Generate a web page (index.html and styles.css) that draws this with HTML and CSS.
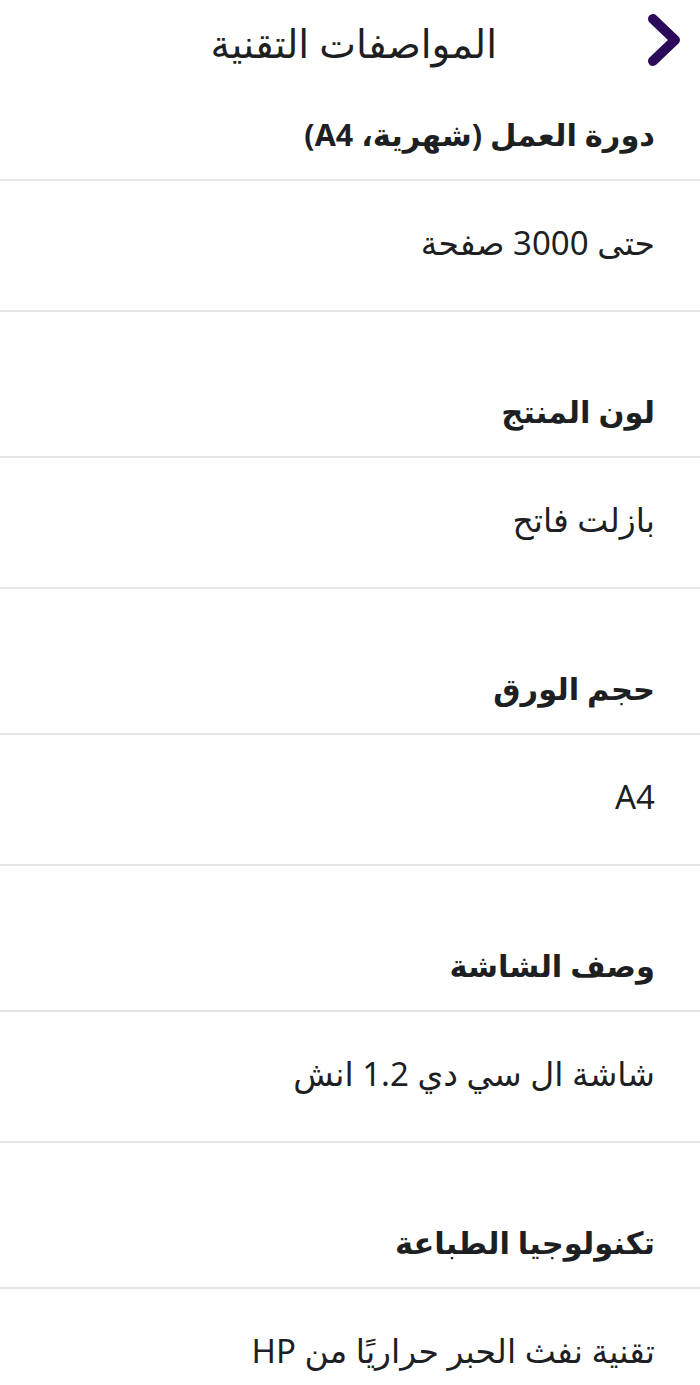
FILE: index.html
```html
<!DOCTYPE html>
<html lang="ar" dir="rtl">
<head>
<meta charset="utf-8">
<link rel="stylesheet" href="styles.css">
</head>
<body>
<header class="topbar">
  <svg class="back" width="40" height="56" viewBox="0 0 40 56" aria-hidden="true">
    <path d="M9 7 L31 28 L9 49" fill="none" stroke="#2b0b5a" stroke-width="10" stroke-linecap="round" stroke-linejoin="round"/>
  </svg>
  <h1 class="title">المواصفات التقنية</h1>
</header>
<main class="specs">
  <section class="spec first">
    <div class="label">دورة العمل (شهرية، A4)</div>
    <div class="value">حتى 3000 صفحة</div>
  </section>
  <section class="spec">
    <div class="label">لون المنتج</div>
    <div class="value">بازلت فاتح</div>
  </section>
  <section class="spec">
    <div class="label">حجم الورق</div>
    <div class="value">A4</div>
  </section>
  <section class="spec">
    <div class="label">وصف الشاشة</div>
    <div class="value">شاشة ال سي دي 1.2 انش</div>
  </section>
  <section class="spec">
    <div class="label">تكنولوجيا الطباعة</div>
    <div class="value">تقنية نفث الحبر حراريًا من HP</div>
  </section>
</main>
</body>
</html>
```
FILE: styles.css
```css
html, body {
  margin: 0;
  padding: 0;
  background: #ffffff;
}
body {
  font-family: "Noto Sans", "DejaVu Sans", sans-serif;
  color: #1d1f23;
  width: 700px;
  overflow: hidden;
}
.topbar {
  height: 96px;
  display: flex;
  align-items: flex-start;
  padding: 0 16px 0 0;
  box-sizing: border-box;
}
.back {
  margin-top: 12px;
  flex: none;
}
.title {
  margin: 16px 147px 0 0;
  font-size: 39px;
  line-height: 54px;
  font-weight: 400;
  color: #1d1f23;
}
.spec .label,
.spec .value {
  border-bottom: 2px solid #e6e6e6;
  padding-right: 45px;
  line-height: 38px;
}
.label {
  font-size: 30.5px;
  font-weight: 700;
  padding-top: 80px;
  padding-bottom: 26px;
}
.first .label {
  padding-top: 19px;
  padding-bottom: 26px;
}
.value {
  font-size: 33px;
  font-weight: 400;
  padding-top: 43px;
  padding-bottom: 48px;
}
```
